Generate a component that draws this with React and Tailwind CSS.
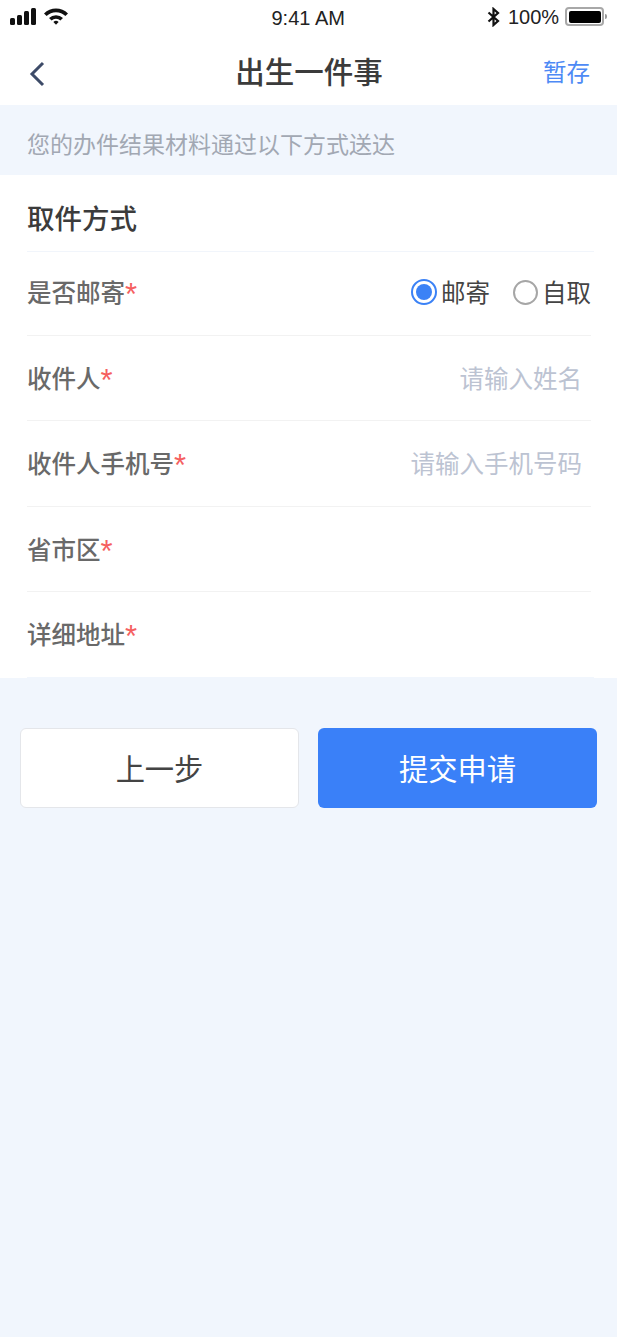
const CJK = { fontFamily: '"Noto Sans CJK SC", "Liberation Sans", sans-serif' };

function Label({ text }) {
  return (
    <div className="flex items-center text-[24.5px] text-[#696969] font-medium leading-none">
      {text}
      <span className="text-[#f56060] text-[31px] font-normal leading-none relative top-[2px]" style={{ fontFamily: '"Liberation Sans", sans-serif' }}>*</span>
    </div>
  );
}

function Row({ label, placeholder, height, line = "bg-[#f2f2f2]", width = "w-[564px]" }) {
  return (
    <div className={`relative ${height} flex items-center justify-between pl-[27px] pr-[35px]`}>
      <Label text={label} />
      {placeholder && <div className="text-[24.5px] text-[#bcc3d2] leading-none">{placeholder}</div>}
      <div className={`absolute bottom-0 left-[27px] h-px ${width} ${line}`} />
    </div>
  );
}

export default function App() {
  return (
    <div className="w-[617px] h-[1337px] bg-[#f1f6fd] overflow-hidden" style={CJK}>
      <div className="bg-white h-[105px] flex flex-col">
        <div className="relative h-[34px] text-[#222]" style={{ fontFamily: '"Liberation Sans", sans-serif' }}>
          <div className="absolute left-[10px] top-[8px] flex items-end gap-[2px] h-[17px]">
            <div className="w-[5px] h-[7px] bg-[#111] rounded-[1.5px]" />
            <div className="w-[5px] h-[10px] bg-[#111] rounded-[1.5px]" />
            <div className="w-[5px] h-[14px] bg-[#111] rounded-[1.5px]" />
            <div className="w-[5px] h-[17px] bg-[#111] rounded-[1.5px]" />
          </div>
          <svg className="absolute left-[43.5px] top-[8px]" width="24" height="17" viewBox="0 0 24 17">
            <path d="M0 5.4 A17 17 0 0 1 24 5.4 L21.4 8 A13.4 13.4 0 0 0 2.6 8 Z" fill="#111" />
            <path d="M5 10 A10 10 0 0 1 19 10 L16.4 12.4 A6.4 6.4 0 0 0 7.6 12.4 Z" fill="#111" />
            <path d="M9.4 14 A3.6 3.6 0 0 1 14.6 14 L12 16.8 Z" fill="#111" />
          </svg>
          <div className="absolute left-[271.5px] top-[7px] text-[20px] leading-[23px]">9:41 AM</div>
          <svg className="absolute left-[487px] top-[7px]" width="14" height="20" viewBox="0 0 14 20">
            <path d="M1.5 5.5 L11 14 L6.5 18 V2 L11 6 L1.5 14.5" fill="none" stroke="#111" strokeWidth="2.2" />
          </svg>
          <div className="absolute left-[508px] top-[6px] text-[20px] leading-[23px]">100%</div>
          <div className="absolute left-[565px] top-[7px] w-[39px] h-[19px] rounded-[4px] border-2 border-[#a8a8a8] p-[1.5px]">
            <div className="w-full h-full bg-black rounded-[2px]" />
          </div>
          <div className="absolute left-[605px] top-[14px] w-[2px] h-[5px] bg-[#999] rounded-r-sm" />
        </div>
        <div className="relative flex-1 flex items-center justify-center">
          <svg className="absolute left-[26px] top-[26px]" width="20" height="28" viewBox="0 0 20 28">
            <path d="M17 3 L6 14 L17 25" fill="none" stroke="#3d4b68" strokeWidth="3" />
          </svg>
          <div className="text-[29.5px] leading-none font-medium text-[#3b3b3b] relative top-[1.5px] left-[0.5px]">出生一件事</div>
          <div className="absolute left-[543px] top-[26px] text-[23.5px] leading-none text-[#4e8af5]">暂存</div>
        </div>
      </div>
      <div className="h-[70px] flex items-center pl-[27px] text-[23px] leading-none text-[#a2a8b3] pt-[7px]">
        您的办件结果材料通过以下方式送达
      </div>
      <div className="bg-white h-[503px]">
        <div className="relative h-[76.5px] flex items-center pl-[27px] pt-[8px] text-[27.5px] leading-none font-medium text-[#3b3b3b]">
          取件方式
          <div className="absolute bottom-0 left-[27px] w-[567px] h-px bg-[#f1f5fb]" />
        </div>
        <div className="relative h-[84px] flex items-center justify-between pl-[27px] pr-[26px] pb-[3px]">
          <Label text="是否邮寄" />
          <div className="flex items-center text-[24.5px] leading-none text-[#444]">
            <div className="w-[26px] h-[26px] rounded-full border-2 border-[#3b82f6] p-[3px] mr-[4px]">
              <div className="w-full h-full rounded-full bg-[#3b82f6]" />
            </div>
            邮寄
            <div className="w-[25px] h-[25px] rounded-full border-2 border-[#a6a6a6] ml-[23px] mr-[4px]" />
            自取
          </div>
          <div className="absolute bottom-0 left-[27px] w-[564px] h-px bg-[#f2f2f2]" />
        </div>
        <Row height="h-[85px]" label="收件人" placeholder="请输入姓名" />
        <Row height="h-[86px]" label="收件人手机号" placeholder="请输入手机号码" />
        <Row height="h-[85px]" label="省市区" />
        <Row height="h-[86px]" label="详细地址" line="bg-[#f1f6fd]" width="w-[567px]" />
      </div>
      <div className="mt-[50px] flex gap-[19px] px-[20px]">
        <button className="w-[279px] h-[80px] bg-white border border-[#e4e6ea] rounded-[6px] text-[29.25px] leading-none text-[#444]">
          上一步
        </button>
        <button className="w-[279px] h-[80px] bg-[#3a80f8] rounded-[6px] text-[29.25px] leading-none text-white">
          提交申请
        </button>
      </div>
    </div>
  );
}
